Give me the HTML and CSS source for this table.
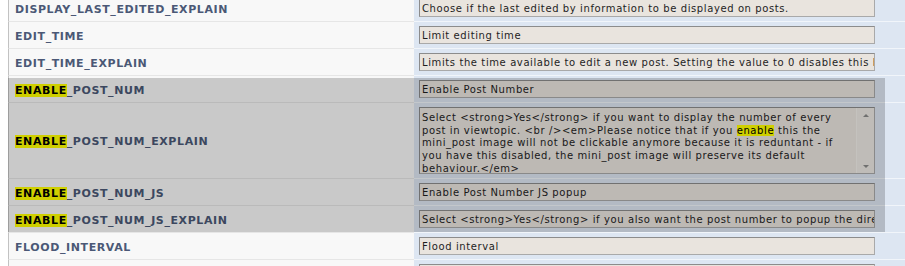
FILE: index.html
```html
<!DOCTYPE html>
<html lang="en">
<head>
<meta charset="utf-8">
<title>Language variables</title>
<link rel="stylesheet" href="styles.css">
</head>
<body>
<div class="config">
  <div class="key">DISPLAY_LAST_EDITED_EXPLAIN</div>
  <div class="val"><div class="field">Choose if the last edited by information to be displayed on posts.</div></div>

  <div class="key">EDIT_TIME</div>
  <div class="val"><div class="field">Limit editing time</div></div>

  <div class="key">EDIT_TIME_EXPLAIN</div>
  <div class="val"><div class="field">Limits the time available to edit a new post. Setting the value to 0 disables this behaviour.</div></div>

  <div class="key"><span><mark class="hit">ENABLE</mark>_POST_NUM</span></div>
  <div class="val"><div class="field">Enable Post Number</div></div>

  <div class="key"><span><mark class="hit">ENABLE</mark>_POST_NUM_EXPLAIN</span></div>
  <div class="val">
    <div class="area">
      <div class="area-text">
        <span class="line">Select &lt;strong&gt;Yes&lt;/strong&gt; if you want to display the number of every</span>
        <span class="line">post in viewtopic. &lt;br /&gt;&lt;em&gt;Please notice that if you <mark class="hit">enable</mark> this the</span>
        <span class="line">mini_post image will not be clickable anymore because it is reduntant - if</span>
        <span class="line">you have this disabled, the mini_post image will preserve its default</span>
        <span class="line">behaviour.&lt;/em&gt;</span>
      </div>
      <div class="area-bar">
        <span class="arrow up"></span>
        <span class="arrow down"></span>
      </div>
    </div>
  </div>

  <div class="key"><span><mark class="hit">ENABLE</mark>_POST_NUM_JS</span></div>
  <div class="val"><div class="field">Enable Post Number JS popup</div></div>

  <div class="key"><span><mark class="hit">ENABLE</mark>_POST_NUM_JS_EXPLAIN</span></div>
  <div class="val"><div class="field">Select &lt;strong&gt;Yes&lt;/strong&gt; if you also want the post number to popup the direct link to the post.</div></div>

  <div class="key">FLOOD_INTERVAL</div>
  <div class="val"><div class="field">Flood interval</div></div>

  <div class="key">FLOOD_INTERVAL_EXPLAIN</div>
  <div class="val"><div class="field">Number of seconds a user must wait between posting new messages.</div></div>
</div>

<!-- search-hit highlight laid over the matching rows -->
<div class="find-block"></div>
</body>
</html>
```

FILE: styles.css
```css
html, body {
  margin: 0;
  padding: 0;
  overflow: hidden;
  background: #ffffff;
}

body {
  width: 905px;
  height: 266px;
  position: relative;
}

.config {
  display: grid;
  grid-template-columns: 406px 600px;
  margin: -5px 0 0 8px;
}

.key {
  display: flex;
  align-items: center;
  box-sizing: border-box;
  border-left: 1px solid #c2c2c2;
  border-bottom: 1px solid #e6e6e6;
  background: #f8f8f8;
  padding: 2px 0 0 6px;
  font-family: "DejaVu Sans", Verdana, sans-serif;
  font-weight: bold;
  font-size: 11px;
  letter-spacing: 0.6px;
  color: #4b5876;
  white-space: nowrap;
}

.val {
  background: #dde6f2;
  border-bottom: 1px solid #f1f5fa;
  padding: 4px 5px;
}

.field {
  box-sizing: border-box;
  width: 456px;
  height: 18px;
  border: 1px solid #a9a9a9;
  border-top-color: #8c8c8c;
  border-left-color: #8c8c8c;
  background: #e9e4de;
  padding: 2px 2px 0;
  font-family: "DejaVu Sans", Verdana, sans-serif;
  font-size: 10px;
  letter-spacing: 0.6px;
  line-height: 14px;
  color: #1e1e1e;
  white-space: nowrap;
  overflow: hidden;
}

.area {
  box-sizing: border-box;
  width: 456px;
  height: 67px;
  display: flex;
  border: 1px solid #a9a9a9;
  border-top-color: #8c8c8c;
  border-left-color: #8c8c8c;
  background: #e9e4de;
  overflow: hidden;
}

.area-text {
  flex: 1;
  padding: 4px 2px 0;
  font-family: "DejaVu Sans", Verdana, sans-serif;
  font-size: 10px;
  letter-spacing: 0.6px;
  line-height: 12.7px;
  color: #1e1e1e;
  overflow: hidden;
}

.line {
  display: block;
  white-space: nowrap;
}

.area-bar {
  width: 17px;
  flex: none;
  border-left: 1px solid #f2efea;
  background: #ece8e3;
  display: flex;
  flex-direction: column;
  justify-content: space-between;
  align-items: center;
  padding: 6px 0 5px;
}

.arrow {
  width: 0;
  height: 0;
  border-left: 3px solid transparent;
  border-right: 3px solid transparent;
}

.arrow.up {
  border-bottom: 3px solid #8a8a8a;
}

.arrow.down {
  border-top: 3px solid #8a8a8a;
}

mark.hit {
  background: #ffff00;
  color: #000000;
  padding: 0;
}

.find-block {
  position: absolute;
  left: 8px;
  top: 78px;
  width: 877px;
  height: 154px;
  background: rgba(0, 0, 0, 0.19);
  pointer-events: none;
}
```
